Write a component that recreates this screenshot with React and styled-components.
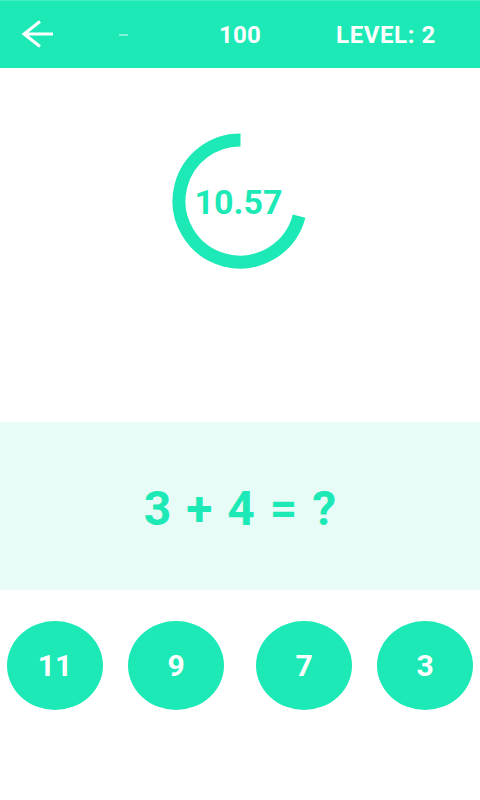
import React from "react";
import styled, { createGlobalStyle } from "styled-components";

const TEAL = "#1de9b6";

const Global = createGlobalStyle`
  html, body { margin: 0; padding: 0; background: #ffffff; }
  body { font-family: Roboto, "Liberation Sans", sans-serif; }
  * { box-sizing: border-box; }
`;

const Page = styled.div`
  width: 480px;
  height: 800px;
  display: flex;
  flex-direction: column;
  background: #ffffff;
  overflow: hidden;
`;

const Header = styled.header`
  height: 68px;
  background: ${TEAL};
  border-top: 1px solid #3ff0c4;
  display: flex;
  align-items: center;
  position: relative;
  color: #ffffff;
  font-family: Roboto, "Liberation Sans", sans-serif;
  font-weight: 700;
`;

const BackButton = styled.button`
  border: 0;
  background: transparent;
  padding: 0;
  margin-left: 21px;
  width: 34px;
  height: 30px;
  display: flex;
  align-items: center;
  justify-content: center;
  cursor: pointer;
`;

const Dash = styled.span`
  width: 9px;
  height: 2px;
  margin-left: 64px;
  margin-top: 1px;
  background: rgba(255, 255, 255, 0.45);
`;

const Score = styled.span`
  position: absolute;
  left: 0;
  right: 0;
  text-align: center;
  font-size: 24px;
  line-height: 1;
  letter-spacing: 0.3px;
  pointer-events: none;
`;

const Level = styled.span`
  margin-left: auto;
  margin-right: 44px;
  font-size: 24px;
  line-height: 1;
  letter-spacing: 0.6px;
`;

const TimerArea = styled.section`
  height: 354px;
  display: flex;
  justify-content: center;
  padding-top: 63px;
`;

const Timer = styled.div`
  position: relative;
  width: 140px;
  height: 140px;
  margin-left: -1px;
`;

const TimerText = styled.div`
  position: absolute;
  inset: 0;
  display: flex;
  align-items: center;
  justify-content: center;
  color: ${TEAL};
  font-family: Roboto, "Liberation Sans", sans-serif;
  font-weight: 700;
  font-size: 34px;
  padding-top: 1px;
  padding-right: 2px;
`;

const Band = styled.section`
  height: 168px;
  background: #e8fcf7;
  display: flex;
  align-items: center;
  justify-content: center;
`;

const Question = styled.h1`
  margin: 0;
  color: ${TEAL};
  font-family: Roboto, "Liberation Sans", sans-serif;
  font-weight: 700;
  font-size: 48px;
  word-spacing: 3px;
  padding-top: 4px;
`;

const Answers = styled.div`
  display: flex;
  justify-content: space-between;
  padding: 0 7px;
  margin-top: 31px;
`;

const AnswerGroup = styled.div`
  display: flex;
  gap: 25px;
`;

const AnswerButton = styled.button`
  width: 96px;
  height: 89px;
  border-radius: 50%;
  border: 0;
  background: ${TEAL};
  color: #ffffff;
  font-family: Roboto, "Liberation Sans", sans-serif;
  font-weight: 700;
  font-size: 30px;
  display: flex;
  align-items: center;
  justify-content: center;
  padding: 0;
  cursor: pointer;
`;

const R = 61;
const C = 2 * Math.PI * R;

function Ring({ fraction }) {
  const len = C * fraction;
  const startDeg = 270 - 360 * fraction;
  return (
    <svg width="140" height="140" viewBox="0 0 140 140">
      <circle
        cx="70"
        cy="70"
        r={R}
        fill="none"
        stroke={TEAL}
        strokeWidth="13"
        strokeDasharray={`${len} ${C}`}
        transform={`rotate(${startDeg} 70 70)`}
      />
    </svg>
  );
}

export default function App() {
  const answers = [11, 9, 7, 3];
  return (
    <>
      <Global />
      <Page>
        <Header>
          <BackButton aria-label="back">
            <svg width="34" height="30" viewBox="0 0 34 30">
              <path
                d="M32 14 H3 M19 1.5 L3 14 L19 26.5"
                fill="none"
                stroke="#ffffff"
                strokeWidth="3"
                strokeLinejoin="miter"
              />
            </svg>
          </BackButton>
          <Dash />
          <Score>100</Score>
          <Level>LEVEL: 2</Level>
        </Header>
        <TimerArea>
          <Timer>
            <Ring fraction={0.71} />
            <TimerText>10.57</TimerText>
          </Timer>
        </TimerArea>
        <Band>
          <Question>3 + 4 = ?</Question>
        </Band>
        <Answers>
          <AnswerGroup>
            <AnswerButton>{answers[0]}</AnswerButton>
            <AnswerButton>{answers[1]}</AnswerButton>
          </AnswerGroup>
          <AnswerGroup>
            <AnswerButton>{answers[2]}</AnswerButton>
            <AnswerButton>{answers[3]}</AnswerButton>
          </AnswerGroup>
        </Answers>
      </Page>
    </>
  );
}
